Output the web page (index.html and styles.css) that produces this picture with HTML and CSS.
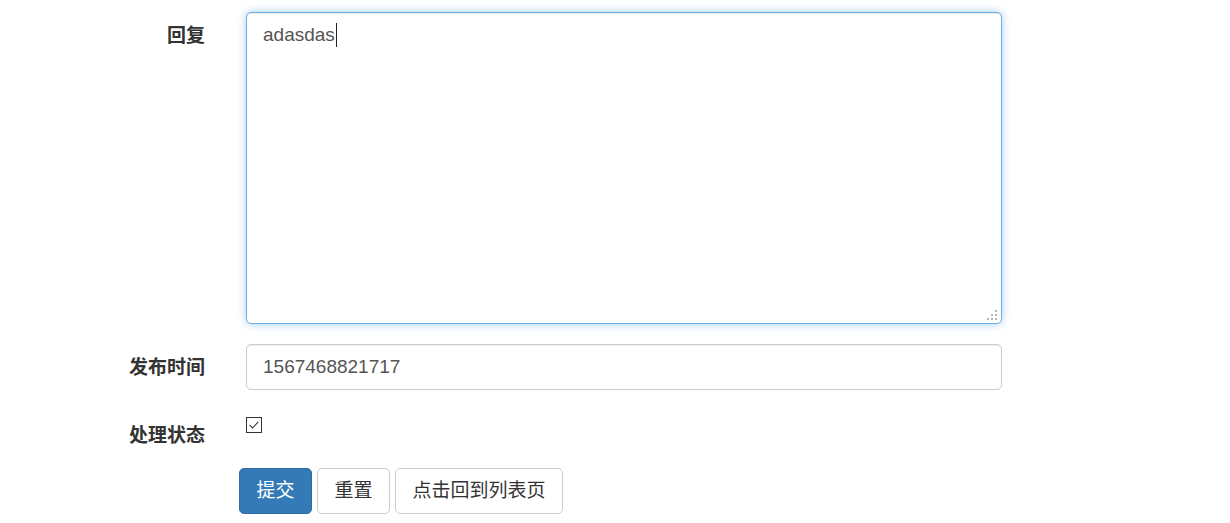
FILE: index.html
```
<!DOCTYPE html>
<html lang="zh-CN">
<head>
<meta charset="utf-8">
<title>回复</title>
<link rel="stylesheet" href="styles.css">
</head>
<body>
<form class="form">
  <div class="group group-text">
    <label class="label" for="reply">回复</label>
    <div class="area-wrap">
      <textarea id="reply" class="control area is-focus">adasdas</textarea>
      <span class="caret"></span>
      <svg class="grip" width="11" height="11" viewBox="0 0 11 11" aria-hidden="true">
        <rect x="8" y="0" width="2" height="2" fill="#b5b5b5"/>
        <rect x="4" y="4" width="2" height="2" fill="#b5b5b5"/>
        <rect x="8" y="4" width="2" height="2" fill="#b5b5b5"/>
        <rect x="0" y="8" width="2" height="2" fill="#b5b5b5"/>
        <rect x="4" y="8" width="2" height="2" fill="#b5b5b5"/>
        <rect x="8" y="8" width="2" height="2" fill="#b5b5b5"/>
      </svg>
    </div>
  </div>
  <div class="group">
    <label class="label" for="time">发布时间</label>
    <input id="time" class="control field" type="text" value="1567468821717">
  </div>
  <div class="group group-check">
    <span class="label label-check">处理状态</span>
    <label class="check">
      <input class="check-input" type="checkbox" checked>
      <svg class="check-box" width="16" height="16" viewBox="0 0 16 16" aria-hidden="true">
        <rect x="0.5" y="0.5" width="15" height="15" fill="#fff" stroke="#333" stroke-width="1"/>
        <path d="M3.6 8.2 L6.6 11 L12.2 4.8" fill="none" stroke="#333" stroke-width="1.1"/>
      </svg>
    </label>
  </div>
  <div class="group group-actions">
    <span class="label"></span>
    <div class="actions">
      <button type="button" class="btn btn-primary">提交</button>
      <button type="reset" class="btn">重置</button>
      <button type="button" class="btn">点击回到列表页</button>
    </div>
  </div>
</form>
</body>
</html>
```
FILE: styles.css
```
html, body {
  margin: 0;
  padding: 0;
  background: #fff;
}

body {
  font-family: "Liberation Sans", "Noto Sans CJK SC", sans-serif;
  font-size: 19px;
  color: #333;
}

.form {
  padding-top: 12px;
}

.group {
  display: grid;
  grid-template-columns: 205px 756px;
  column-gap: 41px;
  margin-bottom: 20px;
}

.label {
  text-align: right;
  font-weight: bold;
  line-height: 27px;
  padding-top: 9.5px;
  color: #333;
}

.label-check {
  padding-top: 11.5px;
}

.control {
  box-sizing: border-box;
  width: 756px;
  margin: 0;
  font-family: "Liberation Sans", "Noto Sans CJK SC", sans-serif;
  font-size: 19px;
  color: #555;
  background: #fff;
  border: 1px solid #ccc;
  border-radius: 5px;
  box-shadow: inset 0 1px 1px rgba(0, 0, 0, 0.075);
  outline: none;
}

.area-wrap {
  position: relative;
  width: 756px;
  height: 312px;
}

.area {
  display: block;
  height: 312px;
  padding: 8px 16px;
  line-height: 27px;
  resize: none;
}

.is-focus {
  border-color: #66afe9;
  box-shadow: inset 0 1px 1px rgba(0, 0, 0, 0.075), 0 0 8px rgba(102, 175, 233, 0.6);
}

.caret {
  position: absolute;
  left: 90px;
  top: 11px;
  width: 1px;
  height: 24px;
  background: #222;
}

.grip {
  position: absolute;
  right: 4px;
  bottom: 3px;
}

.field {
  height: 46px;
  padding: 0 16px;
}

.group-check {
  height: 46px;
  margin-bottom: 12px;
}

.check {
  display: block;
  width: 16px;
  height: 16px;
  margin-top: 7px;
  position: relative;
}

.check-input {
  position: absolute;
  opacity: 0;
  width: 16px;
  height: 16px;
  margin: 0;
}

.check-box {
  display: block;
}

.group-actions {
  margin-bottom: 0;
}

.actions {
  display: flex;
  gap: 5px;
  margin-left: -7px;
}

.btn {
  box-sizing: border-box;
  height: 46px;
  padding: 0 16.5px;
  margin: 0;
  font-family: "Liberation Sans", "Noto Sans CJK SC", sans-serif;
  font-size: 19px;
  line-height: 44px;
  color: #333;
  background: #fff;
  border: 1px solid #ccc;
  border-radius: 5px;
  cursor: pointer;
}

.btn-primary {
  color: #fff;
  background: #337ab7;
  border-color: #2e6da4;
}
```
